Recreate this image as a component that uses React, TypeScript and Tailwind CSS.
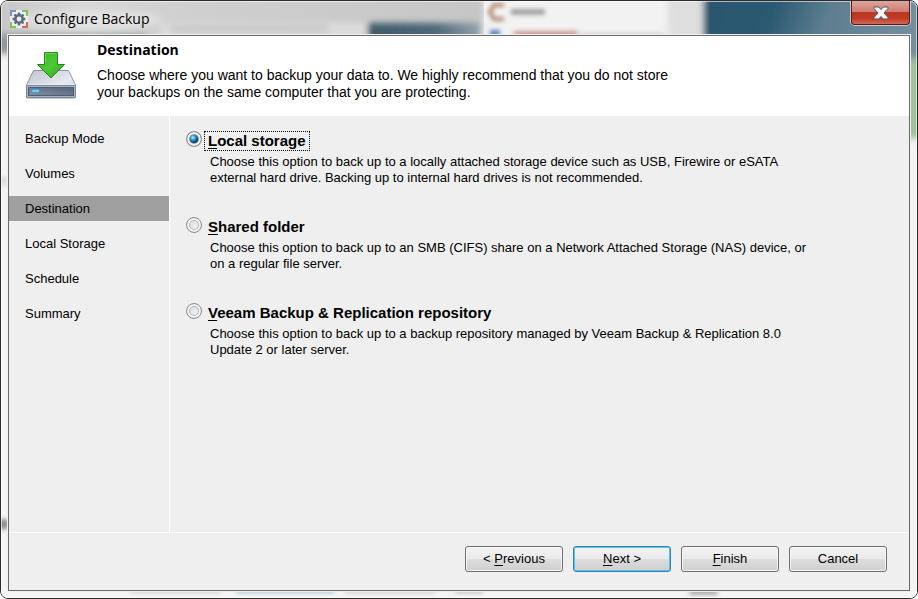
import React, { useState } from 'react';
import clsx from 'clsx';

interface DestinationOption {
  id: string;
  accessKey: string;
  label: string;
  description: string;
}

const STEPS = ['Backup Mode', 'Volumes', 'Destination', 'Local Storage', 'Schedule', 'Summary'];

const OPTIONS: DestinationOption[] = [
  {
    id: 'local',
    accessKey: 'L',
    label: 'ocal storage',
    description:
      'Choose this option to back up to a locally attached storage device such as USB, Firewire or eSATA external hard drive. Backing up to internal hard drives is not recommended.',
  },
  {
    id: 'shared',
    accessKey: 'S',
    label: 'hared folder',
    description:
      'Choose this option to back up to an SMB (CIFS) share on a Network Attached Storage (NAS) device, or on a regular file server.',
  },
  {
    id: 'repository',
    accessKey: 'V',
    label: 'eeam Backup & Replication repository',
    description:
      'Choose this option to back up to a backup repository managed by Veeam Backup & Replication 8.0 Update 2 or later server.',
  },
];

// Blurred desktop seen through the window frame
const Glass: React.FC = () => (
  <svg
    className="absolute inset-0 h-full w-full"
    viewBox="0 0 918 599"
    preserveAspectRatio="none"
    aria-hidden="true"
  >
    <defs>
      <filter id="blurWide" x="-20%" y="-50%" width="140%" height="200%">
        <feGaussianBlur stdDeviation="5" />
      </filter>
      <filter id="blur" x="-20%" y="-50%" width="140%" height="200%">
        <feGaussianBlur stdDeviation="3" />
      </filter>
      <filter id="blurFine" x="-20%" y="-50%" width="140%" height="200%">
        <feGaussianBlur stdDeviation="2" />
      </filter>
      <linearGradient id="bar" x1="0" x2="1" y1="0" y2="0">
        <stop offset="0" stopColor="#c8c8c8" />
        <stop offset="0.16" stopColor="#d6d6d6" />
        <stop offset="0.4" stopColor="#cfcfcf" />
        <stop offset="1" stopColor="#c6c6c6" />
      </linearGradient>
      <linearGradient id="sea" x1="0" x2="1" y1="0" y2="0.1">
        <stop offset="0" stopColor="#2c566e" />
        <stop offset="0.32" stopColor="#2b5a71" />
        <stop offset="0.55" stopColor="#5d7e90" />
        <stop offset="1" stopColor="#7891a0" />
      </linearGradient>
      <linearGradient id="strip" x1="0" x2="1" y1="0" y2="0">
        <stop offset="0" stopColor="#3f5b6b" />
        <stop offset="0.6" stopColor="#4e6979" />
        <stop offset="1" stopColor="#93a3ac" />
      </linearGradient>
    </defs>
    <rect width="918" height="599" fill="#f4f4f4" />
    <rect width="484" height="36" fill="url(#bar)" />
    <g filter="url(#blur)">
      <rect x="-10" y="33" width="156" height="20" fill="#8f999d" />
      <rect x="160" y="22" width="206" height="24" fill="#dcdcdc" />
      <rect x="170" y="25" width="158" height="6" fill="#c4c4c4" />
      <rect x="368" y="22" width="112" height="24" fill="url(#strip)" />
      <rect x="484" y="-10" width="184" height="60" fill="#f2f2f2" />
      <rect x="668" y="-10" width="38" height="60" fill="#dedede" />
      <rect x="704" y="-10" width="240" height="68" fill="url(#sea)" />
      <rect x="905" y="58" width="20" height="80" fill="#9dc498" />
    </g>
    <g filter="url(#blurFine)">
      <path d="M504 4h-10l-4 7 4 7h10" fill="none" stroke="#b08a72" strokeWidth="4" />
      <rect x="511" y="8" width="34" height="6" fill="#a2a2a2" />
      <rect x="490" y="29" width="10" height="8" fill="#5d83c4" />
      <rect x="514" y="30" width="64" height="7" fill="#d09a9a" />
      <rect x="580" y="32" width="84" height="4" fill="#cfcfcf" />
      <rect x="-4" y="176" width="12" height="9" fill="#dddddd" />
      <rect x="-4" y="520" width="12" height="10" fill="#8f8f8f" />
      <rect x="130" y="590" width="90" height="4" fill="#d0d0d0" />
      <rect x="236" y="590" width="98" height="4" fill="#aac4d2" />
      <rect x="345" y="590" width="90" height="4" fill="#cccccc" />
      <rect x="455" y="590" width="28" height="4" fill="#bcbcbc" />
      <rect x="690" y="590" width="28" height="6" fill="#aaaaaa" />
    </g>
    <ellipse cx="90" cy="19" rx="72" ry="9" fill="#ececec" opacity="0.7" filter="url(#blurWide)" />
  </svg>
);

const AppIcon: React.FC = () => (
  <svg className="h-[18px] w-[18px]" viewBox="0 0 18 18" fill="none" aria-hidden="true">
    <rect width="18" height="18" fill="#f6f6f6" opacity="0.8" />
    <path d="M1 6V1h5" stroke="#7296d4" strokeWidth="2" />
    <path d="M12 1h5v5M1 12v5h5" stroke="#77c565" strokeWidth="2" />
    <path d="M17 12v5h-5" stroke="#e3625a" strokeWidth="2" />
    <circle cx="9" cy="9" r="3.7" stroke="#5e6d78" strokeWidth="2.6" />
    {[0, 45, 90, 135].map((angle) => (
      <path
        key={angle}
        d="M9 2.600v2.400M9 13v2.400"
        stroke="#5e6d78"
        strokeWidth="2.4"
        transform={`rotate(${angle} 9 9)`}
      />
    ))}
  </svg>
);

const DriveIcon: React.FC = () => (
  <svg className="h-[48px] w-[52px] shrink-0" viewBox="0 0 52 48" aria-hidden="true">
    <defs>
      <linearGradient id="lid" x1="0" x2="1" y1="0" y2="1">
        <stop offset="0" stopColor="#c0c5cf" />
        <stop offset="0.6" stopColor="#e6e9ee" />
        <stop offset="1" stopColor="#cdd2da" />
      </linearGradient>
      <linearGradient id="front" x1="0" x2="1" y1="1" y2="0">
        <stop offset="0" stopColor="#8290a5" />
        <stop offset="0.5" stopColor="#6b7a90" />
        <stop offset="1" stopColor="#55647a" />
      </linearGradient>
      <linearGradient id="arrow" x1="0" x2="1" y1="0" y2="1">
        <stop offset="0" stopColor="#3fae2b" />
        <stop offset="0.5" stopColor="#4cc935" />
        <stop offset="1" stopColor="#2ba51e" />
      </linearGradient>
    </defs>
    <path d="M8.500 19.500h35l7 14.500v12q0 1-1 1h-47q-1 0-1-1V34z" fill="url(#lid)" stroke="#8b95a6" />
    <path d="M2.500 34h47" stroke="#f4f6f9" />
    <rect x="1.500" y="34.500" width="49" height="12" rx="1" fill="#a9b4c3" stroke="#7b879a" />
    <rect x="3.500" y="36.500" width="45" height="8" fill="url(#front)" stroke="#4f5d72" />
    <rect x="6.500" y="38.500" width="8" height="3" rx="1.500" fill="#6fd0f5" stroke="#3a8fc0" strokeWidth="0.6" />
    <path d="M19.500 1.500h13v12h7L26 27 12.500 13.500h7z" fill="url(#arrow)" stroke="#238a1a" />
    <path d="M20.500 12V2.500h11" fill="none" stroke="#86dd70" opacity="0.7" />
  </svg>
);

const WizardButton: React.FC<{ children: React.ReactNode; primary?: boolean }> = ({ children, primary }) => (
  <button
    type="button"
    className={clsx(
      'h-[26px] w-[98px] rounded-[3px] border bg-[linear-gradient(#f2f2f2,#ebebeb_50%,#dddddd_50%,#cfcfcf)] text-[13px] leading-4',
      primary
        ? 'border-[#3c7fb1] shadow-[inset_0_0_0_1px_#48c8f0]'
        : 'border-[#707070] shadow-[inset_0_0_0_1px_#f6f6f6]',
    )}
  >
    {children}
  </button>
);

export default function App() {
  const [destination, setDestination] = useState('local');

  return (
    <div className="relative flex min-h-screen flex-col overflow-hidden rounded-lg border border-[#2b2b2b] px-[7px] pb-[7px] font-['Liberation_Sans',Arial,sans-serif] text-black">
      <Glass />
      <div className="pointer-events-none absolute inset-0 rounded-[7px] border border-white/60" />

      {/* Title bar */}
      <header className="relative flex h-[34px] items-start justify-between">
        <div className="flex items-center gap-[6px] pt-2 pl-[2px]">
          <AppIcon />
          <h1 className="font-['Open_Sans','Noto_Sans',sans-serif] text-[14px] leading-5">Configure Backup</h1>
        </div>
        <button
          type="button"
          aria-label="Close"
          className="flex h-6 w-[59px] items-center justify-center rounded-b-[4px] border border-t-0 border-[#5a1a16] bg-[linear-gradient(#dfa59d,#cf7d72_48%,#b93822_50%,#bf3a22_75%,#d06a58)] shadow-[0_0_0_1px_#c3ccd2]"
        >
          <svg className="h-[14px] w-[16px]" viewBox="0 0 16 14" aria-hidden="true">
            <path
              d="M1 1h4.800L8 3.500 10.200 1H15v1.500L11 7l4 4.500V13h-4.800L8 10.500 5.800 13H1v-1.500L5 7 1 2.500z"
              fill="#f4f4f4"
              stroke="#535666"
              strokeLinejoin="round"
            />
          </svg>
        </button>
      </header>

      <div className="relative flex flex-1 flex-col border border-[#6b6b6b] bg-[#efefef] shadow-[0_0_0_1px_#f0f0f0]">
        {/* Step heading */}
        <section className="flex h-20 items-start gap-5 bg-white pl-4">
          <div className="pt-[15px]">
            <DriveIcon />
          </div>
          <div className="max-w-[600px] pt-[5px]">
            <h2 className="font-['Open_Sans','Noto_Sans',sans-serif] text-[14px] leading-[18px] font-bold">Destination</h2>
            <p className="pt-2 text-[14px] leading-[17px]">
              Choose where you want to backup your data to. We highly recommend that you do not store your backups on the same computer that you are protecting.
            </p>
          </div>
        </section>

        <div className="flex flex-1">
          <nav className="w-[161px] shrink-0 border-r border-white pt-[10px]">
            <ol className="flex flex-col gap-[10px]">
              {STEPS.map((step) => (
                <li
                  key={step}
                  className={clsx('h-[25px] pl-4 text-[13px] leading-[25px]', step === 'Destination' && 'bg-[#9f9f9f]')}
                >
                  {step}
                </li>
              ))}
            </ol>
          </nav>

          <main className="flex flex-1 flex-col gap-[31px] pt-[15px] pl-4">
            {OPTIONS.map((option) => (
              <div key={option.id} className="flex items-start gap-[2px]">
                <input
                  type="radio"
                  name="destination"
                  id={option.id}
                  checked={destination === option.id}
                  onChange={() => setDestination(option.id)}
                  aria-describedby={`${option.id}-text`}
                  className="h-4 w-4 shrink-0 appearance-none rounded-full border border-[#8e8f8f] bg-[radial-gradient(circle_at_60%_60%,#f0f1f3,#c9cdd4)] shadow-[inset_0_0_0_2px_#f4f4f4,inset_0_0_0_3px_#b4b8c0] checked:bg-[radial-gradient(circle_at_42%_40%,#b5effc_0,#3fb0dc_2px,#15618f_4px,#0b2c48_6px)] checked:shadow-[inset_0_0_0_2px_#f4f4f4,inset_0_0_0_3px_#8d99a6]"
                />
                <div>
                  <label
                    htmlFor={option.id}
                    className={clsx(
                      'block h-5 w-fit border border-dotted px-[3px] text-[15px] leading-[18px] font-bold',
                      destination === option.id ? 'border-black' : 'border-transparent',
                    )}
                  >
                    <span className="underline underline-offset-2">{option.accessKey}</span>
                    {option.label}
                  </label>
                  <p id={`${option.id}-text`} className="max-w-[620px] pt-[3px] pl-[6px] text-[13px] leading-4">
                    {option.description}
                  </p>
                </div>
              </div>
            ))}
          </main>
        </div>

        {/* Wizard buttons */}
        <footer className="flex h-[58px] items-start justify-end gap-[10px] border-t border-white pt-[13px] pr-[22px]">
          <WizardButton>
            &lt; <span className="underline underline-offset-2">P</span>revious
          </WizardButton>
          <WizardButton primary>
            <span className="underline underline-offset-2">N</span>ext &gt;
          </WizardButton>
          <WizardButton>
            <span className="underline underline-offset-2">F</span>inish
          </WizardButton>
          <WizardButton>Cancel</WizardButton>
        </footer>
      </div>
    </div>
  );
}
